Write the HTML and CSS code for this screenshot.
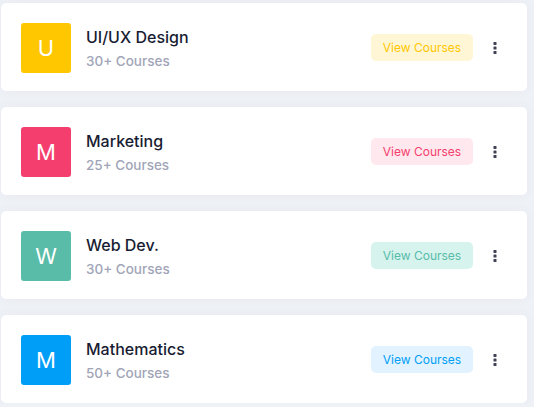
FILE: index.html
```html
<!DOCTYPE html>
<html>
<head>
<meta charset="utf-8">
<link rel="stylesheet" href="styles.css">
</head>
<body>
<div class="list">
  <div class="card">
    <div class="avatar yellow">U</div>
    <div class="info">
      <div class="title">UI/UX Design</div>
      <div class="sub">30+ Courses</div>
    </div>
    <a class="btn btn-yellow">View Courses</a>
    <span class="more"><svg width="4" height="12" viewBox="0 0 4 12"><rect x="0.5" y="0" width="3" height="3" rx="0.6"/><rect x="0.5" y="4.5" width="3" height="3" rx="0.6"/><rect x="0.5" y="9" width="3" height="3" rx="0.6"/></svg></span>
  </div>
  <div class="card">
    <div class="avatar pink">M</div>
    <div class="info">
      <div class="title">Marketing</div>
      <div class="sub">25+ Courses</div>
    </div>
    <a class="btn btn-pink">View Courses</a>
    <span class="more"><svg width="4" height="12" viewBox="0 0 4 12"><rect x="0.5" y="0" width="3" height="3" rx="0.6"/><rect x="0.5" y="4.5" width="3" height="3" rx="0.6"/><rect x="0.5" y="9" width="3" height="3" rx="0.6"/></svg></span>
  </div>
  <div class="card">
    <div class="avatar teal">W</div>
    <div class="info">
      <div class="title">Web Dev.</div>
      <div class="sub">30+ Courses</div>
    </div>
    <a class="btn btn-teal">View Courses</a>
    <span class="more"><svg width="4" height="12" viewBox="0 0 4 12"><rect x="0.5" y="0" width="3" height="3" rx="0.6"/><rect x="0.5" y="4.5" width="3" height="3" rx="0.6"/><rect x="0.5" y="9" width="3" height="3" rx="0.6"/></svg></span>
  </div>
  <div class="card">
    <div class="avatar blue">M</div>
    <div class="info">
      <div class="title">Mathematics</div>
      <div class="sub">50+ Courses</div>
    </div>
    <a class="btn btn-blue">View Courses</a>
    <span class="more"><svg width="4" height="12" viewBox="0 0 4 12"><rect x="0.5" y="0" width="3" height="3" rx="0.6"/><rect x="0.5" y="4.5" width="3" height="3" rx="0.6"/><rect x="0.5" y="9" width="3" height="3" rx="0.6"/></svg></span>
  </div>
</div>
</body>
</html>
```

FILE: styles.css
```css
html, body {
  margin: 0;
  padding: 0;
  background: #eef1f5;
}
body {
  font-family: "Inter", "Noto Sans", sans-serif;
}
.list {
  display: flex;
  flex-direction: column;
  gap: 16px;
  padding: 3px 0 0 1px;
  width: 526px;
}
.card {
  display: flex;
  align-items: center;
  height: 88px;
  box-sizing: border-box;
  padding: 2px 30px 0 20px;
  background: #fff;
  border-radius: 5px;
  box-shadow: 0 0 12px rgba(82, 63, 105, 0.04);
}
.avatar {
  width: 50px;
  height: 50px;
  border-radius: 3px;
  display: flex;
  align-items: center;
  justify-content: center;
  color: #fff;
  font-size: 22px;
  font-weight: 400;
  flex: none;
}
.yellow { background: #ffc700; }
.pink { background: #f43f6e; }
.teal { background: #58bca8; }
.blue { background: #009ef7; }
.info {
  margin-left: 15px;
  flex: 1;
  display: flex;
  flex-direction: column;
  gap: 3px;
}
.title {
  font-size: 16px;
  line-height: 22px;
  font-weight: 500;
  color: #181c32;
}
.sub {
  font-size: 13.5px;
  line-height: 20px;
  font-weight: 500;
  color: #a1a5b7;
}
.btn {
  width: 102px;
  height: 27px;
  margin-bottom: 1px;
  border-radius: 5px;
  display: flex;
  align-items: center;
  justify-content: center;
  font-size: 12px;
  font-weight: 400;
  flex: none;
}
.btn-yellow { background: #fff6d6; color: #ffc700; }
.btn-pink { background: #ffe8ee; color: #f43f6e; }
.btn-teal { background: #d7f3ee; color: #58bca8; }
.btn-blue { background: #e2f3ff; color: #009ef7; }
.more {
  margin-left: 20px;
  width: 4px;
  display: flex;
  fill: #3f4254;
}
```
